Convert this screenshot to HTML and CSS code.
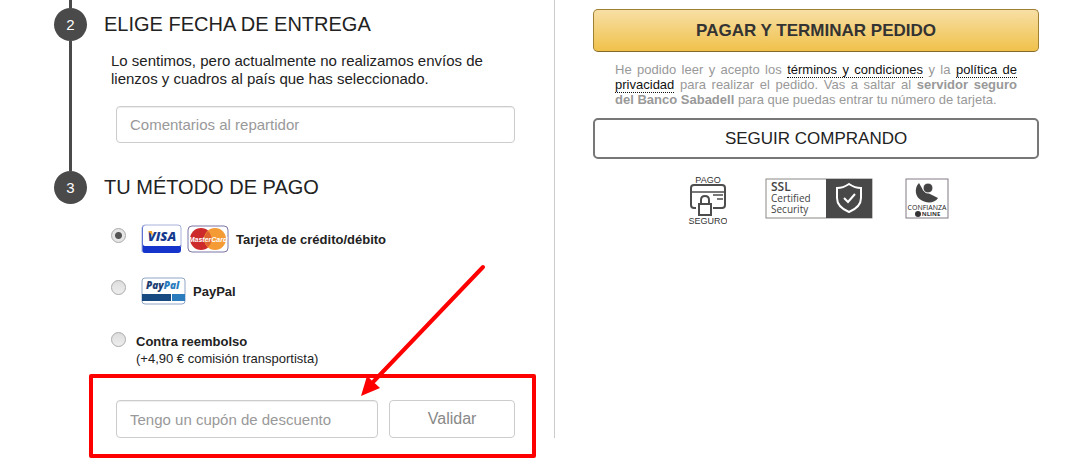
FILE: index.html
```html
<!DOCTYPE html>
<html lang="es">
<head>
  <meta charset="UTF-8">
  <meta name="viewport" content="width=device-width, initial-scale=1">
  <title>Finalizar pedido</title>
  <link rel="stylesheet" href="styles.css">
</head>
<body>

<main class="checkout">
  <div class="steps">
    <div class="rail rail-top"></div>

    <section class="step">
      <div class="marker">
        <span class="number">2</span>
        <div class="rail"></div>
      </div>
      <div class="content">
        <h2>ELIGE FECHA DE ENTREGA</h2>
        <p class="notice">Lo sentimos, pero actualmente no realizamos envíos de lienzos y cuadros al país que has seleccionado.</p>
        <div class="fields">
          <input type="text" class="field" placeholder="Comentarios al repartidor" aria-label="Comentarios al repartidor">
        </div>
      </div>
    </section>

    <section class="step">
      <div class="marker">
        <span class="number">3</span>
      </div>
      <div class="content">
        <h2>TU MÉTODO DE PAGO</h2>

        <div class="methods">
          <div class="method">
            <input type="radio" name="pago" id="tarjeta" checked>
            <label for="tarjeta">
              <svg class="card" width="42" height="30" viewBox="0 0 42 30">
                <rect x="1" y="1" width="39" height="28" rx="3" fill="#1434cb"/>
                <path d="M2 4Q2 1 5 1H37Q40 1 40 4V20Q40 22 37 22H5Q2 22 2 20Z" fill="#fff"/>
                <path d="M1 28V4Q1 1 4 1H37Q40 1 40 4V23" fill="none" stroke="#a9b2dc"/>
                <text x="21" y="17" text-anchor="middle" font-family="Open Sans" font-size="13" font-weight="800" font-style="italic" fill="#173a8f">VISA</text>
                <path d="M7 7H11L12 12Z" fill="#f2a323"/>
              </svg>
              <svg class="card" width="42" height="28" viewBox="0 0 42 28">
                <rect x="1" y="1" width="40" height="26" rx="4" fill="#fff" stroke="#7a75a9"/>
                <circle cx="14" cy="14" r="11" fill="#cd2b2b"/>
                <circle cx="28" cy="14" r="11" fill="#f49b36"/>
                <path d="M21 6A11 11 0 0 1 21 22A11 11 0 0 1 21 6Z" fill="#df632e"/>
                <text x="21" y="17" text-anchor="middle" font-family="Liberation Sans" font-size="7" font-weight="700" font-style="italic" fill="#fff">MasterCard</text>
              </svg>
              <b>Tarjeta de crédito/débito</b>
            </label>
          </div>

          <div class="method">
            <input type="radio" name="pago" id="paypal">
            <label for="paypal">
              <svg class="card" width="45" height="28" viewBox="0 0 45 28">
                <rect x="1" y="1" width="43" height="26" rx="3" fill="#fff" stroke="#8fa6c6"/>
                <text x="5" y="12" font-family="Open Sans" font-size="10" font-weight="800" font-style="italic" fill="#1d3f73">Pay<tspan fill="#2a7cbd">Pal</tspan></text>
                <rect x="1" y="17" width="29" height="7" fill="#174a80"/>
                <rect x="31" y="17" width="13" height="7" fill="#2a7cbd"/>
              </svg>
              <b>PayPal</b>
            </label>
          </div>

          <div class="method cash">
            <input type="radio" name="pago" id="reembolso">
            <label for="reembolso">
              <span><b>Contra reembolso</b><br>(+4,90 € comisión transportista)</span>
            </label>
          </div>
        </div>

        <form class="fields coupon">
          <input type="text" class="field" placeholder="Tengo un cupón de descuento" aria-label="Tengo un cupón de descuento">
          <button type="button" class="validate">Validar</button>
          <div class="highlight"></div>
          <svg class="arrow" width="126" height="134" viewBox="0 0 126 134">
            <path d="M123 3L14 117" stroke="#f00" stroke-width="4" stroke-linecap="round"/>
            <path d="M1 132L7 112L20 124Z" fill="#f00"/>
          </svg>
        </form>
      </div>
    </section>
  </div>

  <aside class="summary">
    <button type="button" class="pay">PAGAR Y TERMINAR PEDIDO</button>
    <p class="legal">He podido leer y acepto los <a href="#">términos y condiciones</a> y la <a href="#">política de privacidad</a> para realizar el pedido. Vas a saltar al <b>servidor seguro del Banco Sabadell</b> para que puedas entrar tu número de tarjeta.</p>
    <button type="button" class="continue">SEGUIR COMPRANDO</button>

    <div class="seals">
      <svg class="secure" width="40" height="52" viewBox="0 0 40 52" role="img" aria-label="Pago seguro">
        <g fill="none" stroke="#4d4d4d" stroke-width="2">
          <path d="M9 33H7Q4 33 4 30V13Q4 10 7 10H35Q38 10 38 13V30Q38 33 35 33H26"/>
          <path d="M4 17H38M26 20H36M30 24H36" stroke-width="1.500"/>
          <path d="M14 29V25Q14 21 18 21Q22 21 22 25V29"/>
          <path d="M12 40V29H24V40Z"/>
        </g>
        <text x="21" y="8" text-anchor="middle" font-family="Liberation Sans" font-size="9" fill="#333">PAGO</text>
        <text x="21" y="49" text-anchor="middle" font-family="Liberation Sans" font-size="9" fill="#333">SEGURO</text>
      </svg>
      <svg class="ssl" width="108" height="41" viewBox="0 0 108 41" role="img" aria-label="SSL Certified Security">
        <rect x="1" y="1" width="106" height="39" fill="#fff" stroke="#8b8585"/>
        <rect x="61" y="1" width="46" height="39" fill="#484848"/>
        <g font-family="Open Sans" fill="#444">
          <text x="6" y="13" font-size="12" font-weight="600">SSL</text>
          <text x="6" y="24" font-size="10">Certified</text>
          <text x="6" y="35" font-size="10">Security</text>
        </g>
        <path d="M84 6Q90 10 96 10V20Q96 29 84 34Q72 29 72 20V10Q78 10 84 6Z" fill="none" stroke="#fff" stroke-width="2"/>
        <path d="M79 20L83 24L90 16" fill="none" stroke="#fff" stroke-width="2"/>
      </svg>
      <svg class="online" width="44" height="41" viewBox="0 0 44 41" role="img" aria-label="Confianza Online">
        <rect x="1" y="1" width="42" height="39" fill="#fff" stroke="#817a83"/>
        <path d="M14 5C9 10 10 19 16 22C22 26 30 25 33 20L25 16L18 12Z" fill="#444"/>
        <circle cx="23" cy="10" r="5" fill="#444" stroke="#fff"/>
        <text x="22" y="32" text-anchor="middle" font-family="Open Sans" font-size="7" fill="#222">CONFIANZA</text>
        <circle cx="13" cy="36" r="3" fill="#333"/>
        <text x="26" y="38" text-anchor="middle" font-family="Open Sans" font-size="6" font-weight="700" fill="#333">NLINE</text>
      </svg>
    </div>
  </aside>
</main>

</body>
</html>
```
FILE: styles.css
```css
* {
  box-sizing: border-box;
}
body {
  margin: 0;
  font-family: "Liberation Sans", Arial, sans-serif;
  background-color: #fff;
  color: #222;
}
h2, p {
  margin: 0;
}
input, button {
  font-family: inherit;
}
.checkout {
  display: flex;
  align-items: flex-start;
  padding-bottom: 36px;
}

/* left column: steps */
.steps {
  width: 51.3%;
  padding: 0 39px 0 54px;
  border-right: 1px solid #ccc;
}
.rail {
  flex: 1;
  width: 3px;
  background-color: #4a4a4a;
}
.rail-top {
  height: 8px;
  margin-left: 15px;
}
.step {
  display: flex;
  gap: 17px;
}
.marker {
  display: flex;
  flex-direction: column;
  align-items: center;
}
.number {
  width: 33px;
  height: 33px;
  line-height: 33px;
  border-radius: 50%;
  background-color: #4a4a4a;
  color: #fff;
  font-size: 15px;
  text-align: center;
}
.content {
  flex: 1;
  min-width: 0;
}
h2 {
  font-size: 20px;
  font-weight: normal;
  line-height: 32px;
}
.notice {
  margin-top: 12px;
  padding-left: 7px;
  font-size: 15px;
  line-height: 18px;
}
.fields {
  display: flex;
  gap: 11px;
  margin: 18px 0 28px 12px;
}
.field {
  flex: 1;
  min-width: 0;
  height: 37px;
  padding: 0 13px;
  border: 1px solid #ccc;
  border-radius: 4px;
  box-shadow: inset 0 1px 1px rgba(0, 0, 0, 0.07);
  font-size: 15px;
}
.field::placeholder {
  color: #999;
}

/* payment methods */
.methods {
  display: flex;
  flex-direction: column;
  padding: 21px 0 0 7px;
}
.method {
  display: flex;
  align-items: flex-start;
  height: 52px;
}
.method input {
  appearance: none;
  width: 15px;
  height: 15px;
  margin: 4px 15px 0 0;
  border: 1px solid #aaa;
  border-radius: 50%;
  background: linear-gradient(#ddd, #eee);
}
.method input:checked {
  background: radial-gradient(circle, #555 0 3px, #e6e6e6 4px);
}
.method label {
  display: flex;
  align-items: center;
  gap: 4px;
  height: 30px;
  font-size: 13px;
  line-height: 17px;
}
.method b {
  margin-left: 3px;
}
.cash input {
  margin-right: 10px;
}
.cash label {
  height: auto;
  padding-top: 5px;
}
.cash b {
  margin-left: 0;
}

/* coupon */
.coupon {
  position: relative;
  margin: 20px 0 0 12px;
}
.coupon .field,
.validate {
  height: 38px;
}
.validate {
  width: 126px;
  border: 1px solid #ccc;
  border-radius: 4px;
  background-color: #fff;
  color: #888;
  font-size: 16px;
}
.highlight {
  position: absolute;
  inset: -26px -21px -20px -27px;
  border: 4px solid #f00;
  border-radius: 2px;
  pointer-events: none;
}
.arrow {
  position: absolute;
  right: 29px;
  bottom: 40px;
  fill: none;
  pointer-events: none;
}

/* right column */
.summary {
  flex: 1;
  min-width: 0;
  padding: 9px 43px 0 38px;
}
.pay, .continue {
  display: block;
  width: 100%;
  border-radius: 5px;
  font-size: 17px;
}
.pay {
  height: 43px;
  border: 1px solid #a08032;
  border-bottom-color: #846a29;
  background: linear-gradient(#f7dfa5, #f0c14b);
  color: #333;
  font-weight: bold;
}
.legal {
  margin: 10px 22px 11px;
  color: #999;
  font-size: 13px;
  line-height: 15px;
  text-align: justify;
}
.legal a {
  border-bottom: 1px dotted #111;
  color: #111;
  text-decoration: none;
}
.continue {
  height: 41px;
  border: 2px solid #777;
  background-color: #fff;
  color: #222;
}
.seals {
  display: flex;
  justify-content: center;
  align-items: flex-start;
  gap: 32px;
  margin-top: 16px;
  padding-left: 4px;
}
.secure {
  margin-right: 6px;
}
.ssl, .online {
  margin-top: 3px;
}
```
